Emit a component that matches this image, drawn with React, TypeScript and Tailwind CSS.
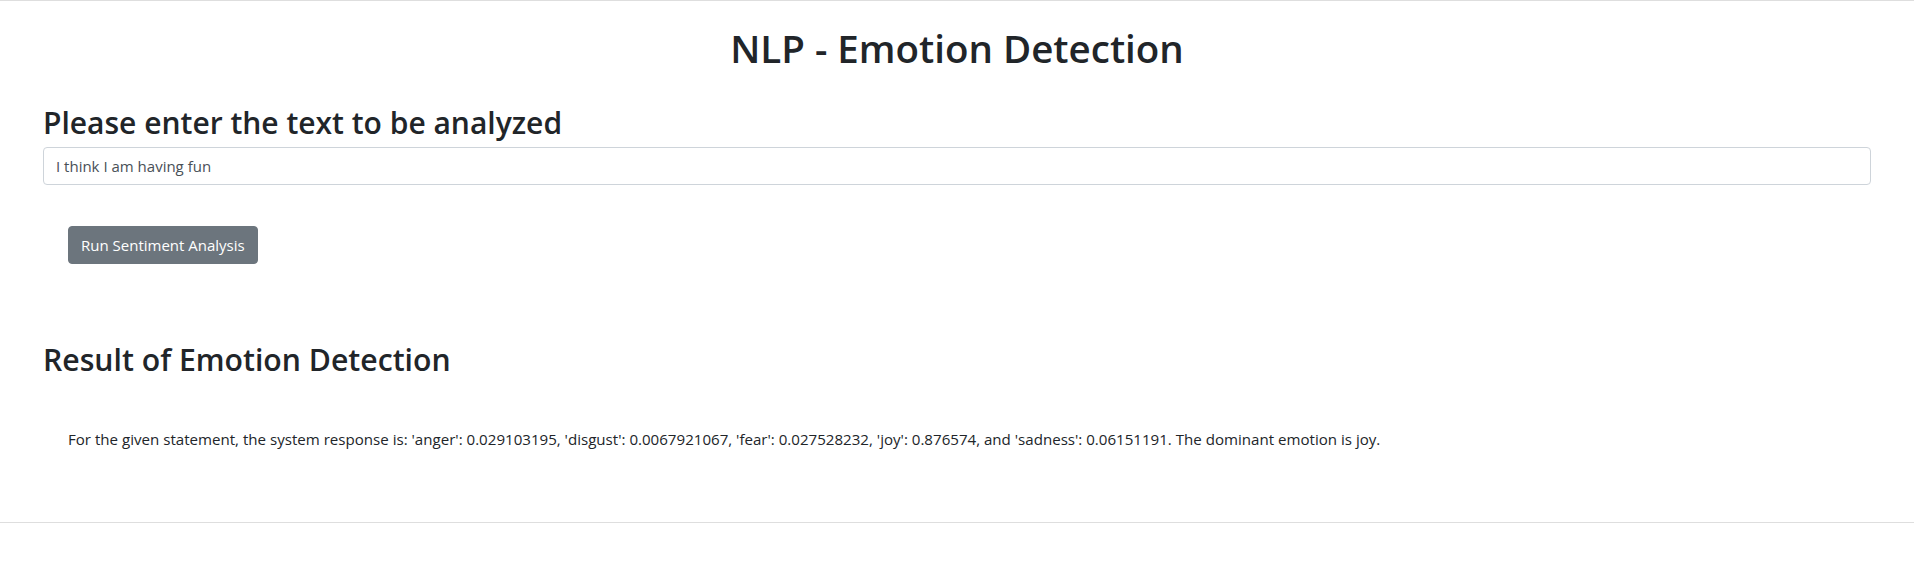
import React from "react";

const RESULT_TEXT =
  "For the given statement, the system response is: 'anger': 0.029103195, 'disgust': 0.0067921067, 'fear': 0.027528232, 'joy': 0.876574, and 'sadness': 0.06151191. The dominant emotion is joy.";

export default function App() {
  const [text, setText] = React.useState("I think I am having fun");

  return (
    <div className="min-h-screen bg-white font-['Open_Sans',sans-serif] text-[#212529]">
      <hr className="border-0 border-t border-[#dedede]" />

      {/* Заголовок */}
      <h1 className="mt-[23px] text-center text-[38.5px] leading-[48px] font-semibold">NLP - Emotion Detection</h1>

      <div className="px-[43px]">
        <h2 className="mt-[32px] mb-[5px] text-[30px] leading-[38px] font-semibold">Please enter the text to be analyzed</h2>
        <input
          type="text"
          value={text}
          onChange={(e) => setText(e.target.value)}
          className="block h-[38px] w-full rounded-[4px] border border-[#ced4da] bg-white px-3 text-[15px] text-[#495057] outline-none"
        />

        <div className="mt-[41px] pl-[25px]">
          <button
            type="button"
            className="h-[38px] rounded-[4px] border border-[#6c757d] bg-[#6c757d] px-3 text-[15px] text-white"
          >
            Run Sentiment Analysis
          </button>
        </div>

        <h2 className="mt-[77px] text-[30.2px] leading-[38px] font-semibold">Result of Emotion Detection</h2>
        <p className="mt-[50px] pl-[25px] text-[15.1px] leading-[21px]">{RESULT_TEXT}</p>
      </div>

      <hr className="mt-[72px] border-0 border-t border-[#dedede]" />
    </div>
  );
}
